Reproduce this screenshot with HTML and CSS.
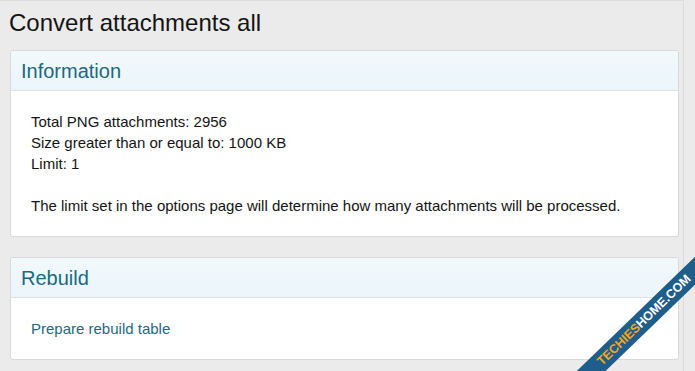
FILE: index.html
```html
<!DOCTYPE html>
<html lang="en">
<head>
    <meta charset="UTF-8">
    <meta name="viewport" content="width=device-width, initial-scale=1.0">
    <title>Convert attachments all</title>
    <link rel="stylesheet" href="styles.css">
</head>
<body>
    <div class="page">
        <h1 class="page-title">Convert attachments all</h1>

        <div class="panel">
            <h2 class="panel-header">Information</h2>
            <div class="panel-body">
                Total PNG attachments: 2956<br>
                Size greater than or equal to: 1000 KB<br>
                Limit: 1<br>
                <br>
                The limit set in the options page will determine how many attachments will be processed.
            </div>
        </div>

        <div class="panel">
            <h2 class="panel-header">Rebuild</h2>
            <div class="panel-body">
                <a href="#" class="panel-link">Prepare rebuild table</a>
            </div>
        </div>
    </div>
    <div class="watermark-clip">
        <div class="watermark"><span class="wm-orange">TECHIES</span>HOME.COM</div>
    </div>
</body>
</html>
```

FILE: styles.css
```css
html, body {
    margin: 0;
    height: 100%;
    overflow: hidden;
}
body {
    background-color: #ebebeb;
    font-family: "Liberation Sans", Arial, sans-serif;
    color: #141414;
    position: relative;
}
.page {
    width: 686px;
    height: 100%;
    box-sizing: border-box;
    padding: 6px 4px 0 10px;
    border-top: 1px solid #dedede;
    border-left: 2px solid #f4f4f4;
    border-right: 1px solid #dcdcdc;
    margin-left: -2px;
}
.page-title {
    font-size: 24px;
    font-weight: normal;
    line-height: 32px;
    margin: 0 0 11px -1px;
}
.panel {
    background-color: #ffffff;
    border: 1px solid #d9d9d9;
    border-radius: 3px;
    margin-bottom: 20px;
    overflow: hidden;
}
.panel-header {
    margin: 0;
    height: 39px;
    line-height: 40px;
    padding: 0 10px;
    font-size: 20px;
    font-weight: normal;
    color: #1b6a7e;
    background: linear-gradient(to bottom, #f2f9fd, #ebf5fa);
    border-bottom: 1px solid #dde3e6;
}
.panel-body {
    padding: 20px 20px 20px 20px;
    font-size: 15px;
    line-height: 21px;
}
.panel-link {
    color: #1b6a7e;
    text-decoration: none;
}

/* site watermark in the corner */
.watermark-clip {
    position: absolute;
    inset: 0;
    overflow: hidden;
    pointer-events: none;
}
.watermark {
    position: absolute;
    left: 494px;
    top: 310px;
    width: 300px;
    height: 20px;
    line-height: 20px;
    background-color: #1f5e8a;
    color: #ffffff;
    font-weight: bold;
    font-size: 12.5px;
    text-align: center;
    transform: rotate(-44deg);
}
.wm-orange {
    color: #f3a521;
}
```
